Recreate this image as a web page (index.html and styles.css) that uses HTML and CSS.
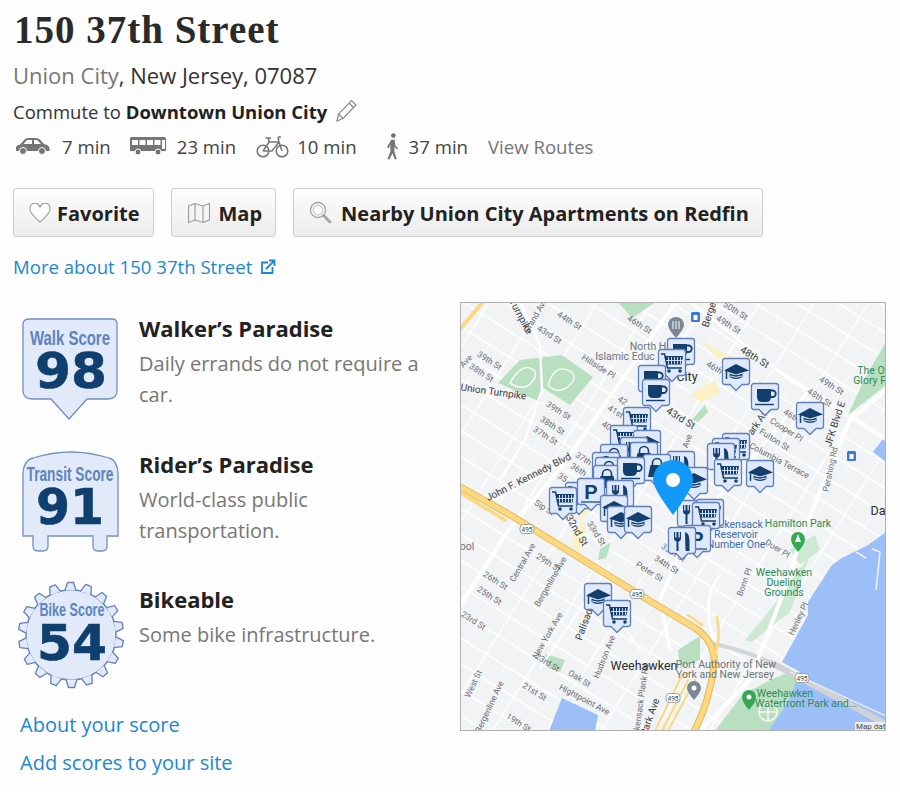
FILE: index.html
```html
<!DOCTYPE html>
<html lang="en">
<head>
<meta charset="utf-8">
<title>150 37th Street</title>
<link rel="stylesheet" href="styles.css">
</head>
<body>
<svg class="defs" width="0" height="0" aria-hidden="true">
  <defs>
    <g id="pinbase">
      <path d="M3 .5H25a2.5 2.5 0 0 1 2.5 2.5V24a2.5 2.5 0 0 1-2.5 2.5H20L14 32.5 8 26.5H3A2.5 2.5 0 0 1 .5 24V3A2.5 2.5 0 0 1 3 .5Z" fill="#dfe9fb" stroke="#5f80b8" stroke-width="1.300"/>
    </g>
    <symbol id="cart" viewBox="0 0 28 33" overflow="visible">
      <use href="#pinbase"/>
      <path d="M3 5H6.500L9.500 19H24" fill="none" stroke="#123f6d" stroke-width="1.500"/>
      <path d="M7 7H25L23.500 15.500H9Z" fill="#123f6d"/>
      <path d="M10.500 8V15M13.500 8V15M16.500 8V15M19.500 8V15M22.500 8V15M8 11.500H25" stroke="#dfe9fb" stroke-width=".9"/>
      <circle cx="11" cy="22" r="1.800" fill="#123f6d"/><circle cx="22" cy="22" r="1.800" fill="#123f6d"/>
    </symbol>
    <symbol id="cup" viewBox="0 0 28 33" overflow="visible">
      <use href="#pinbase"/>
      <path d="M6 6H20V14Q20 19 15 19H11Q6 19 6 14Z" fill="#123f6d"/>
      <path d="M20 7.500H21.500A3.200 3.200 0 0 1 21.500 14H19.500" fill="none" stroke="#123f6d" stroke-width="1.800"/>
      <path d="M4 21.500H23" stroke="#123f6d" stroke-width="1.400"/>
    </symbol>
    <symbol id="cap" viewBox="0 0 28 33" overflow="visible">
      <use href="#pinbase"/>
      <path d="M14 6 27 12.500 14 16.500 2 12.500Z" fill="#123f6d"/>
      <path d="M7.500 15.500Q14 19 20.500 15.500V19Q14 23 7.500 19Z" fill="#123f6d"/>
      <path d="M8 18Q14 20.500 20 18" stroke="#dfe9fb" stroke-width="1" fill="none"/>
      <path d="M4.500 13V21" stroke="#123f6d" stroke-width="1.500"/>
    </symbol>
    <symbol id="bag" viewBox="0 0 28 33" overflow="visible">
      <use href="#pinbase"/>
      <path d="M9.500 11V9A4.500 4.500 0 0 1 18.500 9V11" fill="none" stroke="#123f6d" stroke-width="1.600"/>
      <path d="M7.500 11H20.500L23 23H5Z" fill="#123f6d"/>
    </symbol>
    <symbol id="food" viewBox="0 0 28 33" overflow="visible">
      <use href="#pinbase"/>
      <path d="M6 5V11Q6 14 8.500 14.500V24H10.500V14.500Q13 14 13 11V5H11.800V10.500H10.500V5H8.500V10.500H7.200V5Z" fill="#123f6d"/>
      <path d="M17 5Q21.500 6 21.500 14V24H17.500Z" fill="#123f6d"/>
    </symbol>
    <symbol id="park" viewBox="0 0 28 33" overflow="visible">
      <use href="#pinbase"/>
      <text x="14" y="21" class="pin-p">P</text>
      <path d="M4 24H24" stroke="#123f6d" stroke-width="1.200"/>
    </symbol>
    <g id="shield"><rect x="-7" y="-4.500" width="14" height="9" rx="3.500" fill="#fff" stroke="#8a8d91" stroke-width=".8"/><text y="2.500" class="shield-text">495</text></g>
    <g id="tooth"><path d="M-6 -44.500 -3.500 -52.500H2.500L5 -44.500" fill="#e2eafa" stroke="#6582b4" stroke-width="1.300" stroke-linejoin="round"/></g>
    <pattern id="grid" patternUnits="userSpaceOnUse" width="46" height="22" patternTransform="rotate(32)">
      <rect width="46" height="22" fill="#f1f3f4"/>
      <path d="M0 11H46M23 0V22" stroke="#fff" stroke-width="1.400"/>
      <path d="M0 0V22" stroke="#fff" stroke-width=".9"/>
    </pattern>
  </defs>
</svg>

<header class="head">
  <h1 class="title">150 37th Street</h1>
  <p class="place"><span class="place-city">Union City</span>, New Jersey, 07087</p>
  <p class="commute"><span>Commute to <strong>Downtown Union City</strong></span>
    <svg class="pencil" width="23" height="25" viewBox="0 0 23 25"><path d="M2 23 3.500 16 16.500 2.500 21 7 8 20.500ZM3.500 16 8 20.500M14 5 18.500 9.500" fill="#fff" stroke="#8a8a8a" stroke-width="1.200"/></svg>
  </p>
  <div class="modes">
    <span class="mode mode-car">
      <svg width="35" height="20" viewBox="0 0 35 20"><path d="M1 12Q1 9 5 8.500L10 3Q11 2 14 2H21Q23 2 25 3.500L29 8Q34 9 34.500 12V15H1Z" fill="#757575"/><path d="M12 4H17V8H8.500ZM19 4H22L26 8H19Z" fill="#fdfdfd"/><circle cx="8" cy="15" r="3.500" fill="#757575" stroke="#fdfdfd"/><circle cx="27" cy="15" r="3.500" fill="#757575" stroke="#fdfdfd"/></svg>
      7 min</span>
    <span class="mode mode-bus">
      <svg width="38" height="20" viewBox="0 0 38 20"><path d="M2 1H35Q37 1 37 3V15H1V2Z" fill="#757575"/><path d="M3 4H9V9H3ZM10.500 4H16.500V9H10.500ZM18 4H24V9H18ZM25.500 4H31.500V9H25.500ZM33 4H36V13H33Z" fill="#fdfdfd"/><circle cx="9" cy="16" r="3" fill="#757575" stroke="#fdfdfd"/><circle cx="29" cy="16" r="3" fill="#757575" stroke="#fdfdfd"/></svg>
      23 min</span>
    <span class="mode mode-bike">
      <svg width="33" height="24" viewBox="0 0 33 24"><g fill="none" stroke="#757575" stroke-width="1.500"><circle cx="7" cy="17" r="5.800"/><circle cx="26" cy="17" r="5.800"/><path d="M7 17 13 8H23L26 17M7 17H16L23 8M12 4 13.500 8M9.500 4H15M22 3H25M22 3 23 8"/></g></svg>
      10 min</span>
    <span class="mode mode-walk">
      <svg width="15" height="27" viewBox="0 0 15 32"><circle cx="8.500" cy="3" r="2.800" fill="#757575"/><path d="M6 8H10L11 15 14 18 13 19.500 9.500 16.500 9.800 22 12.500 31H10L7.500 24 4 31H1.500L5 22 5 14 3 18 1 17Z" fill="#757575"/></svg>
      37 min</span>
    <a class="routes">View Routes</a>
  </div>
  <div class="actions">
    <a class="btn">
      <svg width="22" height="20" viewBox="0 0 22 20"><path d="M11 19C7 15 1 11 1 6A5 5 0 0 1 11 4.500 5 5 0 0 1 21 6C21 11 15 15 11 19Z" fill="#fff" stroke="#9a9a9a" stroke-width="1.100"/></svg>
      <span class="btn-text">Favorite</span></a>
    <a class="btn btn-map">
      <svg width="24" height="22" viewBox="0 0 24 22"><path d="M1.500 4 8 1.500 16 4 22.500 1.500V18L16 20.500 8 18 1.500 20.500ZM8 1.500V18M16 4V20.500" fill="#f4f4f4" stroke="#9a9a9a" stroke-width="1.100"/></svg>
      <span class="btn-text">Map</span></a>
    <a class="btn btn-near">
      <svg width="23" height="23" viewBox="0 0 23 23"><circle cx="9" cy="9" r="7.500" fill="#fff" stroke="#a5a5a5" stroke-width="1.400"/><circle cx="9" cy="9" r="4.800" fill="none" stroke="#c8c8c8" stroke-width="1.200"/><path d="M14.500 14.500 21 21" stroke="#a5a5a5" stroke-width="2.800" stroke-linecap="round"/></svg>
      <span class="btn-text">Nearby Union City Apartments on Redfin</span></a>
  </div>
  <a class="more">More about 150 37th Street
    <svg width="16" height="16" viewBox="0 0 16 16"><path d="M8 3.500H2V14H12.500V8" fill="none" stroke="#1c87d3" stroke-width="1.800"/><path d="M6 10 14 2M9 1.500H14.500V7" fill="none" stroke="#1c87d3" stroke-width="1.800"/></svg>
  </a>
</header>

<main class="main">
  <section class="scores">
    <div class="score">
      <svg class="badge badge-walk" width="108" height="104" viewBox="0 0 108 104">
        <path d="M13 1H95Q100 1 100 6V72Q100 81 91 81H70L52 101 34 81H15Q6 81 6 72V6Q6 1 13 1Z" fill="#e2eafa" stroke="#6f90c6" stroke-width="1.300"/>
        <text x="53" y="27" textLength="80" lengthAdjust="spacingAndGlyphs" class="badge-label">Walk Score</text>
        <text x="54" y="70" textLength="72" lengthAdjust="spacingAndGlyphs" class="badge-num">98</text>
      </svg>
      <div class="score-text"><h2 class="score-title">Walker’s Paradise</h2><p class="score-desc">Daily errands do not require a car.</p></div>
    </div>
    <div class="score score-mid">
      <svg class="badge badge-transit" width="108" height="102" viewBox="0 0 108 102">
        <path d="M6 22Q7 9 16 7 36 1 54 1 72 1 92 7 100 9 101 22V85H90V95Q90 100 85 100H81Q76 100 76 95V85H31V95Q31 100 26 100H21Q16 100 16 95V85H6Z" fill="#e2eafa" stroke="#6f90c6" stroke-width="1.300"/>
        <text x="53" y="30" textLength="87" lengthAdjust="spacingAndGlyphs" class="badge-label">Transit Score</text>
        <text x="53" y="73" textLength="68" lengthAdjust="spacingAndGlyphs" class="badge-num">91</text>
      </svg>
      <div class="score-text"><h2 class="score-title">Rider’s Paradise</h2><p class="score-desc">World-class public transportation.</p></div>
    </div>
    <div class="score score-last">
      <svg class="badge badge-bike" width="108" height="106" viewBox="0 0 108 106">
        <g transform="translate(54 53)">
          <circle r="45" fill="#e2eafa" stroke="#6582b4" stroke-width="1.300"/>
          <use href="#tooth"/><use href="#tooth" transform="rotate(20)"/><use href="#tooth" transform="rotate(40)"/><use href="#tooth" transform="rotate(60)"/><use href="#tooth" transform="rotate(80)"/><use href="#tooth" transform="rotate(100)"/><use href="#tooth" transform="rotate(120)"/><use href="#tooth" transform="rotate(140)"/><use href="#tooth" transform="rotate(160)"/><use href="#tooth" transform="rotate(180)"/><use href="#tooth" transform="rotate(200)"/><use href="#tooth" transform="rotate(220)"/><use href="#tooth" transform="rotate(240)"/><use href="#tooth" transform="rotate(260)"/><use href="#tooth" transform="rotate(280)"/><use href="#tooth" transform="rotate(300)"/><use href="#tooth" transform="rotate(320)"/><use href="#tooth" transform="rotate(340)"/>
          <circle r="44" fill="#e2eafa"/>
        </g>
        <text x="55" y="34" textLength="65" lengthAdjust="spacingAndGlyphs" class="badge-label badge-label-bike">Bike Score</text>
        <text x="55" y="78" textLength="70" lengthAdjust="spacingAndGlyphs" class="badge-num">54</text>
      </svg>
      <div class="score-text"><h2 class="score-title">Bikeable</h2><p class="score-desc">Some bike infrastructure.</p></div>
    </div>
    <nav class="links">
      <a class="link">About your score</a>
      <a class="link">Add scores to your site</a>
    </nav>
  </section>

  <svg class="map" width="426" height="429" viewBox="460 302 426 429">
    <rect x="460" y="302" width="426" height="429" fill="url(#grid)"/>
    <!-- parks and water -->
    <g fill="#b9dfc1">
      <path d="M498 383 520 360 562 355 593 377 570 405 543 388 540 402Z"/>
      <path d="M618 302H656L632 318Z"/>
      <path d="M886 342 865 378 848 415 886 385Z"/>
      <path d="M600 549 611 542 606 558 598 560Z"/>
      <path d="M715 731 742 695 770 680 790 672 800 672 788 702 768 731Z"/>
      <path d="M678 650 700 636 700 660 680 668Z"/>
      <path d="M745 640 770 610 810 555 790 612 752 642Z" fill="#cde8d3"/>
      <path d="M790 550 815 535 820 550 800 565Z" fill="#cde8d3"/>
      <path d="M545 654 565 660 560 672 548 668Z"/>
      <path d="M692 420 705 405 708 412 698 422Z"/>
    </g>
    <g fill="none" stroke="#f4f6f4" stroke-width="1.600">
      <path d="M510 383Q520 365 530 368 540 372 532 382 524 392 510 383ZM548 385Q555 362 572 372 578 380 566 388 556 394 548 385Z"/>
      <circle cx="768" cy="712" r="9"/><path d="M758 712H778M768 702V722"/>
    </g>
    <g fill="#9cbff7">
      <path d="M886 532 868 545 842 558 832 565 808 602 808 615 782 662 800 672 788 702 768 731H886Z"/>
      <path d="M886 435 873 452 886 462Z"/>
      <path d="M549 731 562 698 598 715 595 731Z"/>
    </g>
    <path d="M856 552 866 558M872 549 880 552 876 590" stroke="#f1f3f4" stroke-width="1.500" fill="none"/>
    <path d="M770 662 886 724" stroke="#cfd2d6" stroke-width="6"/>
    <path d="M790 672 886 716" stroke="#e6e8ea" stroke-width="1.500"/>
    <path d="M705 642Q745 650 772 663" stroke="#d3d6d9" stroke-width="4" fill="none"/>
    <g fill="none" stroke="#fff" stroke-linecap="round">
      <path d="M460 605 505 535 565 462 675 303" stroke-width="3.500"/>
      <path d="M495 500 565 462" stroke-width="2.500"/>
      <path d="M808 392 690 530 660 600 670 650" stroke-width="3"/>
      <path d="M886 390 850 420 800 540 790 575 750 680 700 731" stroke-width="4"/>
      <path d="M520 302 540 345 542 390 525 440 500 480" stroke-width="2.500"/>
      <path d="M690 302 790 380 886 440" stroke-width="2.500"/>
      <path d="M720 575Q700 600 714 640" stroke-width="2.500"/>
      <path d="M605 600 640 650M540 668 610 565" stroke-width="2"/>
    </g>
    <path d="M700 340 740 362 716 358ZM690 395 715 380 720 392 702 402ZM565 490 580 520 590 510ZM572 540 582 520 586 530 578 555Z" fill="#fdf0c4"/>
    <!-- highways -->
    <g fill="none" stroke-linejoin="round" stroke-linecap="round">
      <path d="M459 486 512 516 635 592 695 628Q716 642 714 665 710 700 694 732" stroke="#e6b85f" stroke-width="7"/>
      <path d="M459 486 512 516 635 592 695 628Q716 642 714 665 710 700 694 732" stroke="#fcd980" stroke-width="5"/>
      <path d="M459 492 505 520" stroke="#fcd980" stroke-width="3.500"/>
      <path d="M461 328 483 302" stroke="#fcd980" stroke-width="4"/>
      <path d="M717 617Q721 640 715 655M688 615 702 625" stroke="#fcd980" stroke-width="2.500"/>
      <path d="M655 731 682 675 690 672M662 731 688 680M668 731 695 680" stroke="#fcd980" stroke-width="2"/>
    </g>
    <g><use href="#shield" x="527" y="529"/><use href="#shield" x="637" y="594"/><use href="#shield" x="802" y="678"/><use href="#shield" x="673" y="698"/></g>
    <!-- street labels -->
    <g class="st">
      <text transform="translate(538 317) rotate(-60)">Grand Ave</text>
      <text transform="translate(568 323) rotate(32)">44th St</text>
      <text transform="translate(548 337) rotate(32)">43rd St</text>
      <text transform="translate(638 327) rotate(32)">46th St</text>
      <text transform="translate(734 313) rotate(32)">50th St</text>
      <text transform="translate(727 327) rotate(32)">49th St</text>
      <text transform="translate(713 370) rotate(32)">46th</text>
      <text transform="translate(830 388) rotate(32)">49th St</text>
      <text transform="translate(818 400) rotate(32)">48th St</text>
      <text transform="translate(790 418) rotate(32)">46th</text>
      <text transform="translate(785 432) rotate(32)">Cooper Pl</text>
      <text transform="translate(773 442) rotate(32)">Fulton St</text>
      <text transform="translate(778 463) rotate(28)">Columbia Terrace</text>
      <text transform="translate(833 470) rotate(-78)">Pershing Rd</text>
      <text transform="translate(488 363) rotate(32)">39th St</text>
      <text transform="translate(480 375) rotate(32)">38th St</text>
      <text transform="translate(468 363) rotate(-45)">Ave</text>
      <text transform="translate(597 369) rotate(32)">Hillside Pl</text>
      <text transform="translate(557 413) rotate(32)">39th St</text>
      <text transform="translate(551 428) rotate(32)">38th St</text>
      <text transform="translate(544 438) rotate(32)">37th St</text>
      <text transform="translate(621 403) rotate(32)">42</text>
      <text transform="translate(614 414) rotate(32)">41st</text>
      <text transform="translate(605 428) rotate(32)">40</text>
      <text transform="translate(690 442) rotate(-70)">Ave</text>
      <text transform="translate(582 461) rotate(32)">37th</text>
      <text transform="translate(577 472) rotate(32)">36th</text>
      <text transform="translate(561 480) rotate(32)">35</text>
      <text transform="translate(543 510) rotate(32)">Sip St</text>
      <text transform="translate(594 535) rotate(58)">33rd St</text>
      <text transform="translate(525 564) rotate(-60)">Central Ave</text>
      <text transform="translate(547 565) rotate(32)">29th St</text>
      <text transform="translate(553 583) rotate(-60)">Bergenline Ave</text>
      <text transform="translate(494 583) rotate(32)">26th St</text>
      <text transform="translate(488 598) rotate(32)">25th St</text>
      <text transform="translate(472 623) rotate(32)">23rd St</text>
      <text transform="translate(648 574) rotate(32)">Peter St</text>
      <text transform="translate(665 567) rotate(32)">34th St</text>
      <text transform="translate(672 555) rotate(32)">33th St</text>
      <text transform="translate(550 637) rotate(-60)">New York Ave</text>
      <text transform="translate(607 658) rotate(-68)">Hudson Ave</text>
      <text transform="translate(546 665) rotate(32)">23rd St</text>
      <text transform="translate(578 681) rotate(32)">Oak St</text>
      <text transform="translate(533 694) rotate(32)">21st St</text>
      <text transform="translate(583 702) rotate(28)">Hightpoint Ave</text>
      <text transform="translate(476 685) rotate(-65)">West St</text>
      <text transform="translate(492 708) rotate(-65)">Bergenline Ave</text>
      <text transform="translate(517 725) rotate(32)">19th St</text>
      <text transform="translate(643 705) rotate(-82)">Hackensack Plank Rd</text>
      <text transform="translate(776 551) rotate(32)">Duer Pl</text>
      <text transform="translate(747 583) rotate(-70)">Bonn Pl</text>
      <text transform="translate(801 620) rotate(-65)">Henley Pl</text>
    </g>
    <g class="st st-dark">
      <text transform="translate(518 318) rotate(62)">Turnpike</text>
      <text transform="translate(713 313) rotate(-72)">Bergen</text>
      <text transform="translate(753 360) rotate(32)">48th St</text>
      <text transform="translate(760 425) rotate(-55)">Park Ave</text>
      <text transform="translate(838 425) rotate(-72)">JFK Blvd E</text>
      <text transform="translate(493 395) rotate(8)">Union Turnpike</text>
      <text transform="translate(679 421) rotate(32)">43rd St</text>
      <text transform="translate(530 480) rotate(-27)">John F. Kennedy Blvd</text>
      <text transform="translate(574 532) rotate(60)">32nd St</text>
      <text transform="translate(588 623) rotate(-70)">Palisade</text>
      <text transform="translate(653 718) rotate(-70)">Park Ave</text>
    </g>
    <g class="poi poi-gray"><text x="648" y="350">North H</text><text x="625" y="360">Islamic Educ</text><text x="726" y="668">Port Authority of New</text><text x="725" y="678">York and New Jersey</text></g>
    <g class="poi poi-green">
      <text x="871" y="374">The O</text><text x="870" y="384">Glory P</text><text x="798" y="527">Hamilton Park</text>
      <text x="784" y="576">Weehawken</text><text x="784" y="586">Dueling</text><text x="784" y="596">Grounds</text>
      <text x="785" y="697">Weehawken</text><text x="806" y="707">Waterfront Park and...</text>
    </g>
    <g class="poi poi-blue"><text x="738" y="528">ackensack</text><text x="736" y="538">Reservoir</text><text x="736" y="548">Number One</text></g>
    <text x="687" y="381" class="town">City</text>
    <text x="644" y="670" class="town">Weehawken</text>
    <text x="878" y="515" class="town">Da</text>
    <text x="467" y="550" class="poi poi-gray">ool</text>
    <!-- small place markers -->
    <rect x="691" y="312" width="9" height="10" rx="1.500" fill="#3b78d8"/><rect x="693.500" y="315" width="4" height="5" fill="#fff"/>
    <rect x="847" y="451" width="9" height="10" rx="1.500" fill="#3b78d8"/><rect x="849.500" y="454" width="4" height="5" fill="#fff"/>
    <path d="M676 338Q668 329 668 325A7 7 0 0 1 684 325Q684 329 676 338Z" fill="#7b8794"/><path d="M673 321V329M676 321V329M679 321V329" stroke="#fff" stroke-width="1"/>
    <path d="M694 700Q687 692 687 688A7 7 0 0 1 701 688Q701 692 694 700Z" fill="#7b8794"/><circle cx="694" cy="688" r="2.500" fill="#fff"/>
    <path d="M798 552Q791 544 791 539A7 7 0 0 1 805 539Q805 544 798 552Z" fill="#34a853"/><path d="M798 534 801 542H795Z" fill="#fff"/>
    <path d="M749 710Q742 702 742 697A7 7 0 0 1 756 697Q756 702 749 710Z" fill="#34a853"/><circle cx="749" cy="697" r="2.500" fill="#fff"/>
    <!-- amenity pins -->
    <use href="#cup" x="667" y="338" width="28" height="33"/>
    <use href="#cart" x="658" y="349" width="28" height="33"/>
    <use href="#cup" x="638" y="365" width="28" height="33"/>
    <use href="#cup" x="642" y="379" width="28" height="33"/>
    <use href="#cap" x="722" y="358" width="28" height="33"/>
    <use href="#cup" x="751" y="383" width="28" height="33"/>
    <use href="#cap" x="796" y="402" width="28" height="33"/>
    <use href="#cart" x="623" y="407" width="28" height="33"/>
    <use href="#cart" x="610" y="425" width="28" height="33"/>
    <use href="#cap" x="633" y="430" width="28" height="33"/>
    <use href="#food" x="620" y="437" width="28" height="33"/>
    <use href="#bag" x="630" y="442" width="28" height="33"/>
    <use href="#bag" x="600" y="444" width="28" height="33"/>
    <use href="#bag" x="592" y="452" width="28" height="33"/>
    <use href="#bag" x="595" y="457" width="28" height="33"/>
    <use href="#bag" x="593" y="465" width="28" height="33"/>
    <use href="#food" x="667" y="451" width="28" height="33"/>
    <use href="#bag" x="643" y="454" width="28" height="33"/>
    <use href="#cup" x="617" y="457" width="28" height="33"/>
    <use href="#cap" x="680" y="467" width="28" height="33"/>
    <use href="#cart" x="565" y="482" width="28" height="33"/>
    <use href="#park" x="577" y="478" width="28" height="33"/>
    <use href="#food" x="606" y="480" width="28" height="33"/>
    <use href="#cart" x="549" y="487" width="28" height="33"/>
    <use href="#cap" x="600" y="495" width="28" height="33"/>
    <use href="#cap" x="607" y="506" width="28" height="33"/>
    <use href="#cap" x="624" y="506" width="28" height="33"/>
    <use href="#food" x="677" y="500" width="28" height="33"/>
    <use href="#cart" x="696" y="499" width="28" height="33"/>
    <use href="#cart" x="692" y="502" width="28" height="33"/>
    <use href="#park" x="683" y="525" width="28" height="33"/>
    <use href="#food" x="668" y="527" width="28" height="33"/>
    <use href="#cart" x="722" y="433" width="28" height="33"/>
    <use href="#cart" x="712" y="438" width="28" height="33"/>
    <use href="#food" x="707" y="443" width="28" height="33"/>
    <use href="#cart" x="714" y="459" width="28" height="33"/>
    <use href="#cap" x="746" y="460" width="28" height="33"/>
    <use href="#cap" x="584" y="583" width="28" height="33"/>
    <use href="#cart" x="603" y="600" width="28" height="33"/>
    <!-- main marker -->
    <path d="M673 515Q653 488 653 480A20 20 0 0 1 693 480Q693 488 673 515Z" fill="#1298f6"/>
    <circle cx="673" cy="480" r="7" fill="#fff"/>
    <rect x="855" y="722" width="31" height="9" fill="#f4f4f4" opacity=".9"/>
    <text x="856" y="729" class="attrib">Map dat</text>
  </svg>
</main>
</body>
</html>
```

FILE: styles.css
```css
html, body { margin: 0; padding: 0; }
body {
  width: 900px;
  height: 792px;
  overflow: hidden;
  background: #fdfdfd;
  color: #222;
  font-family: "Open Sans", "Liberation Sans", sans-serif;
}
.defs { position: absolute; }
a { cursor: pointer; }

.head { padding: 0 0 0 13px; height: 302px; box-sizing: border-box; }
.title {
  margin: 0;
  padding: 7px 0 0 1px;
  font-family: "Liberation Serif", serif;
  font-size: 39px;
  line-height: 46px;
  font-weight: 700;
  letter-spacing: 1px;
  color: #2a2a2a;
}
.place {
  margin: 7px 0 0;
  font-size: 22px;
  line-height: 30px;
  color: #333;
}
.place-city { color: #777; }
.commute {
  margin: 9px 0 0;
  display: flex;
  align-items: center;
  font-size: 18.500px;
  line-height: 26px;
  color: #333;
  white-space: pre;
}
.commute strong { font-weight: 700; color: #222; }
.pencil { margin: -4px 0 0 8px; }

.modes {
  display: flex;
  align-items: center;
  height: 34px;
  margin-top: 4px;
  font-size: 18.600px;
  color: #444;
}
.mode { display: flex; align-items: center; white-space: nowrap; }
.mode-car { margin-left: 2px; gap: 12px; }
.mode-bus { margin-left: 18px; gap: 10px; }
.mode-bike { margin-left: 20px; gap: 8px; }
.mode-walk { margin-left: 28px; gap: 9px; }
.routes { margin-left: 20px; color: #777; }

.actions { display: flex; gap: 17px; margin-top: 25px; }
.btn {
  display: flex;
  align-items: center;
  gap: 6px;
  height: 49px;
  box-sizing: border-box;
  padding: 0 13px 0 15px;
  border: 1px solid #cfcfcf;
  border-radius: 3px;
  background: linear-gradient(#fdfdfd, #ececec);
  font-size: 20px;
  font-weight: 700;
  color: #222;
  white-space: nowrap;
}
.btn-text { padding-top: 2px; }
.btn-map { gap: 8px; }
.btn-near { gap: 9px; }
.more {
  display: inline-flex;
  align-items: center;
  gap: 8px;
  margin-top: 16px;
  font-size: 18.600px;
  line-height: 28px;
  color: #1c87d3;
}

.main { display: flex; align-items: flex-start; }
.scores { width: 460px; padding: 13px 0 0 17px; box-sizing: border-box; }
.score { display: flex; gap: 14px; height: 136px; }
.score-mid { height: 135px; }
.score-last { height: 120px; }
.badge { flex: none; overflow: visible; }
.badge-walk { margin-top: 3px; }
.badge-bike { margin-top: -4px; }
.score-text { width: 290px; }
.score-title {
  margin: 0;
  font-size: 22px;
  line-height: 26px;
  font-weight: 700;
  color: #222;
}
.score-desc {
  margin: 7px 0 0;
  font-size: 20px;
  line-height: 31px;
  color: #777;
}
.badge-label {
  font-family: "Liberation Sans Narrow", "Liberation Sans", sans-serif;
  font-size: 20px;
  font-weight: 700;
  fill: #5c84c0;
  text-anchor: middle;
}
.badge-label-bike { font-size: 18px; }
.badge-num {
  font-family: "DejaVu Sans", sans-serif;
  font-size: 50px;
  font-weight: 700;
  fill: #0f3f6e;
  stroke: #0f3f6e;
  stroke-width: .6px;
  text-anchor: middle;
}
.links { display: flex; flex-direction: column; margin: 0 0 0 3px; }
.link { font-size: 20px; line-height: 38px; color: #1c87d3; }

.map { display: block; flex: none; outline: 1px solid #b0b0b0; outline-offset: -1px; }
.st { font-family: Roboto, sans-serif; font-size: 8.500px; fill: #6a6e73; text-anchor: middle; }
.st-dark { font-size: 10px; fill: #3c4043; }
.poi { font-family: Roboto, sans-serif; font-size: 10.500px; text-anchor: middle; }
.poi-gray { fill: #70757a; }
.poi-green { fill: #2f8a57; }
.poi-blue { fill: #3a6db5; }
.town { font-family: Roboto, sans-serif; font-size: 12.500px; fill: #2b2b2b; text-anchor: middle; }
.attrib { font-family: Roboto, sans-serif; font-size: 8px; fill: #444; }
.shield-text { font-family: Roboto, sans-serif; font-size: 6.500px; fill: #444; text-anchor: middle; }
.pin-p { font-family: "Liberation Sans", sans-serif; font-size: 20px; font-weight: 700; fill: #123f6d; text-anchor: middle; }
```
